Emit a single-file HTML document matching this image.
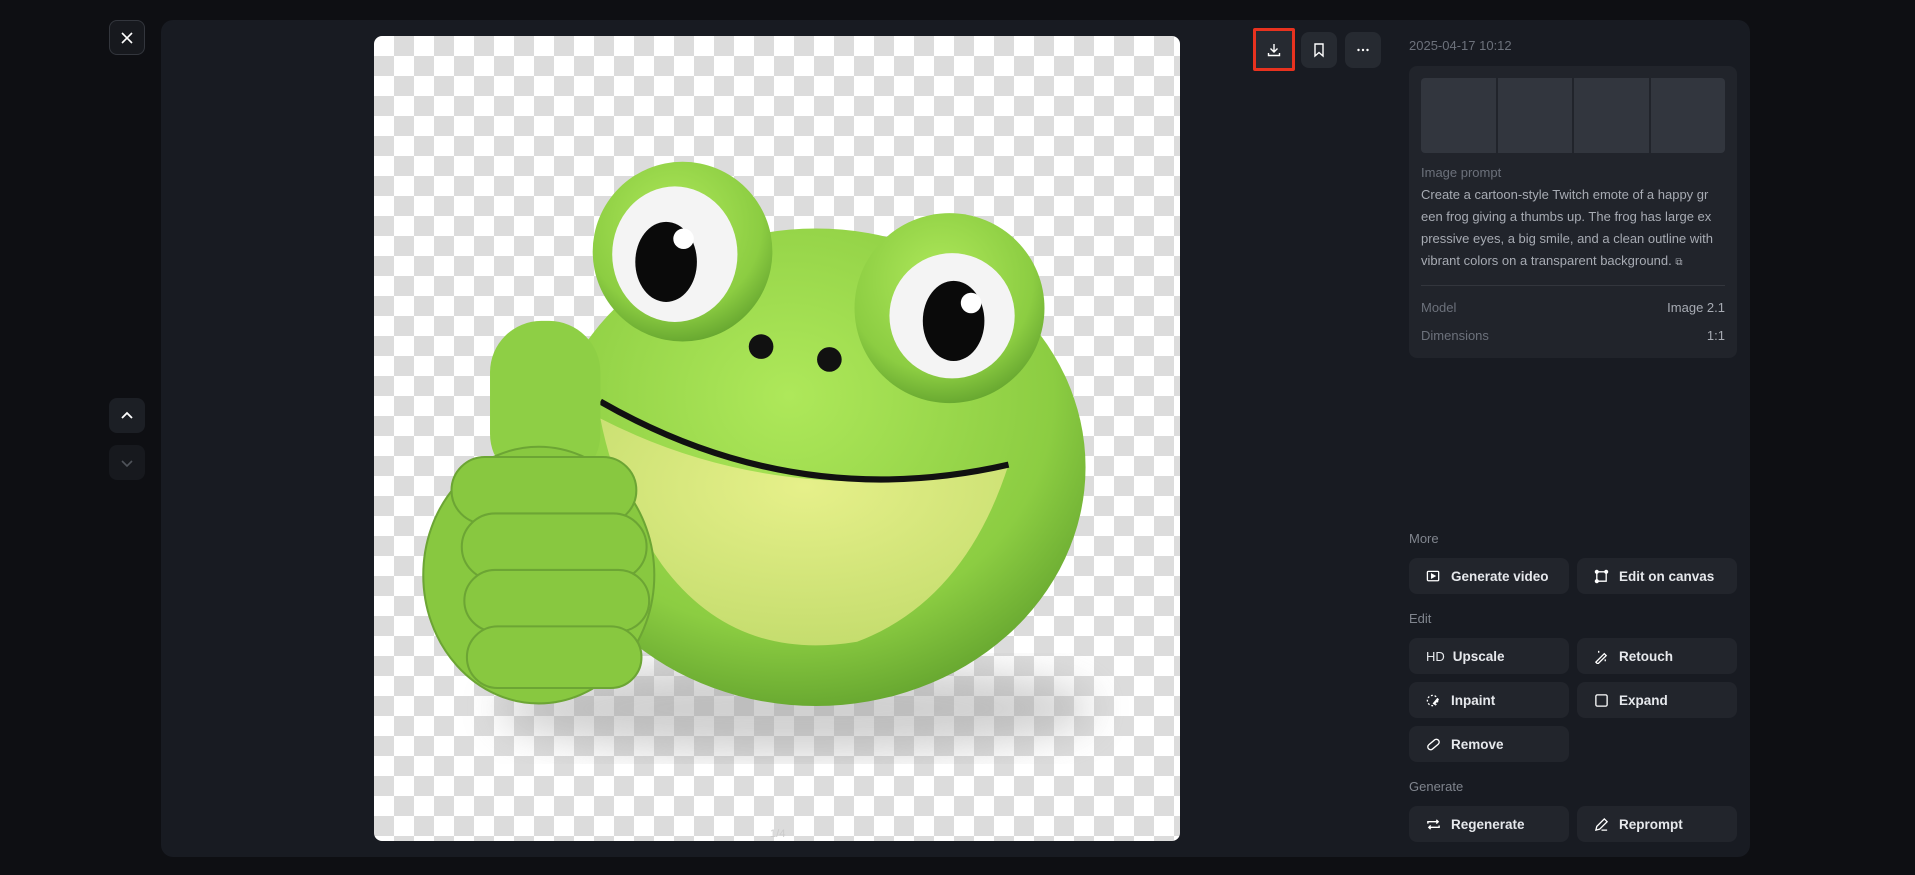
<!DOCTYPE html>
<html><head><meta charset="utf-8"><style>
*{box-sizing:border-box;margin:0;padding:0}
body{width:1915px;height:875px;background:#0e0f13;font-family:"Liberation Sans",sans-serif;position:relative;overflow:hidden}
.abs{position:absolute}
.sq{position:absolute;width:36px;height:35px;border-radius:8px;background:#1c1f25;display:flex;align-items:center;justify-content:center}
.panel{left:161px;top:20px;width:1589px;height:837px;background:#181b22;border-radius:12px}
.img{left:374px;top:36px;width:806px;height:805px;border-radius:8px;overflow:hidden;background-color:#fff;
background-image:linear-gradient(45deg,#dcdcdc 25%,transparent 25%,transparent 75%,#dcdcdc 75%),linear-gradient(45deg,#dcdcdc 25%,transparent 25%,transparent 75%,#dcdcdc 75%);
background-size:40px 40px;background-position:0 0,20px 20px}
.ib{position:absolute;top:32px;width:36px;height:36px;border-radius:8px;background:#262a31;display:flex;align-items:center;justify-content:center}
.card{left:1409px;top:66px;width:328px;height:292px;background:#21242b;border-radius:8px}
.lbl{color:#6c717b;font-size:13px}
.btn{position:absolute;width:160px;height:36px;border-radius:8px;background:#22252c;color:#e6e8ec;font-size:13.5px;font-weight:bold;display:flex;align-items:center;padding-left:17px}
.btn svg{margin-right:10px}
.sec{position:absolute;left:1409px;color:#80858e;font-size:13px}
</style></head><body>
<div class="sq" style="left:109px;top:20px;border:1px solid #33363d;background:#17191e"><svg width="16" height="16" viewBox="0 0 16 16"><path d="M3 3L13 13M13 3L3 13" stroke="#fff" stroke-width="1.6"/></svg></div>
<div class="sq" style="left:109px;top:398px"><svg width="16" height="16" viewBox="0 0 16 16"><path d="M3 10L8 5L13 10" stroke="#fff" stroke-width="1.8" fill="none"/></svg></div>
<div class="sq" style="left:109px;top:445px;background:#17191e"><svg width="16" height="16" viewBox="0 0 16 16"><path d="M3 6L8 11L13 6" stroke="#50545b" stroke-width="1.6" fill="none"/></svg></div>
<div class="abs panel"></div>
<div class="abs img">
<svg width="806" height="805" viewBox="0 0 1568 1568">
<defs><filter id="b"><feGaussianBlur stdDeviation="40"/></filter>
<radialGradient id="g" cx="0.45" cy="0.35" r="0.7"><stop offset="0" stop-color="#aee85a"/><stop offset="0.7" stop-color="#8ccd42"/><stop offset="1" stop-color="#5f9f2c"/></radialGradient>
<radialGradient id="y" cx="0.5" cy="0.3" r="0.7"><stop offset="0" stop-color="#e6f08a"/><stop offset="1" stop-color="#c5dd6e"/></radialGradient></defs>
<ellipse cx="820" cy="1310" rx="580" ry="90" fill="#999" opacity="0.45" filter="url(#b)"/>
<g fill="url(#g)">
<ellipse cx="860" cy="840" rx="525" ry="465"/>
<circle cx="600" cy="420" r="175"/>
<circle cx="1120" cy="530" r="185"/>
</g>
<path d="M440 745 Q800 930 1235 835 Q1150 1100 940 1180 Q700 1220 560 1030 Q470 900 440 745Z" fill="url(#y)"/>
<path d="M440 712 Q820 930 1235 835" stroke="#111" stroke-width="12" fill="none"/>
<ellipse cx="585" cy="425" rx="122" ry="132" fill="#f4f4f4"/>
<ellipse cx="1125" cy="545" rx="122" ry="122" fill="#f4f4f4"/>
<ellipse cx="568" cy="440" rx="60" ry="78" fill="#0a0a0a"/>
<ellipse cx="1128" cy="555" rx="60" ry="78" fill="#0a0a0a"/>
<circle cx="602" cy="395" r="20" fill="#fff"/>
<circle cx="1162" cy="520" r="20" fill="#fff"/>
<circle cx="753" cy="605" r="24" fill="#111"/>
<circle cx="886" cy="630" r="24" fill="#111"/>
<rect x="225" y="555" width="215" height="320" rx="100" fill="#8ecf45"/>
<g fill="#88c840" stroke="#6ca534" stroke-width="4">
<ellipse cx="320" cy="1050" rx="225" ry="250"/>
<rect x="150" y="820" width="360" height="130" rx="65"/>
<rect x="170" y="930" width="360" height="130" rx="65"/>
<rect x="175" y="1040" width="360" height="120" rx="60"/>
<rect x="180" y="1150" width="340" height="120" rx="60"/>
</g>
<text x="770" y="1560" font-size="22" fill="#ccc" font-family="Liberation Sans">1/4</text>
</svg></div>
<div class="ib" style="left:1253px;top:28px;width:42px;height:43px;border:3px solid #e8321f;border-radius:2px;background:#262a31"><svg width="16" height="16" viewBox="0 0 16 16" fill="none" stroke="#fff" stroke-width="1.4"><path d="M8 2V10M4.5 6.5L8 10L11.5 6.5M2.5 11V13.5H13.5V11"/></svg></div>
<div class="ib" style="left:1301px"><svg width="16" height="16" viewBox="0 0 16 16" fill="none" stroke="#fff" stroke-width="1.4"><path d="M4 2H12V14L8 10.5L4 14Z"/></svg></div>
<div class="ib" style="left:1345px"><svg width="16" height="16" viewBox="0 0 16 16" fill="#fff"><circle cx="3.5" cy="8" r="1.2"/><circle cx="8" cy="8" r="1.2"/><circle cx="12.5" cy="8" r="1.2"/></svg></div>
<div class="abs" style="left:1409px;top:38px;color:#6c717b;font-size:13px">2025-04-17 10:12</div>
<div class="abs card"></div>
<div class="abs" style="left:1421px;top:78px;display:flex;gap:2px">
<div style="width:75px;height:75px;background:#32363e;border-radius:4px 0 0 4px"></div><div style="width:74px;height:75px;background:#32363e"></div><div style="width:75px;height:75px;background:#32363e"></div><div style="width:74px;height:75px;background:#32363e;border-radius:0 4px 4px 0"></div></div>
<div class="abs lbl" style="left:1421px;top:165px">Image prompt</div>
<div class="abs" style="left:1421px;top:184px;width:310px;color:#a7abb3;font-size:13px;line-height:22px">Create a cartoon-style Twitch emote of a happy gr een frog giving a thumbs up. The frog has large ex pressive eyes, a big smile, and a clean outline with vibrant colors on a transparent background. <span style="font-size:10px">⧉</span></div>
<div class="abs" style="left:1421px;top:285px;width:304px;height:1px;background:#33363d"></div>
<div class="abs lbl" style="left:1421px;top:300px">Model</div>
<div class="abs" style="right:190px;top:300px;color:#a7abb3;font-size:13px">Image 2.1</div>
<div class="abs lbl" style="left:1421px;top:328px">Dimensions</div>
<div class="abs" style="right:190px;top:328px;color:#a7abb3;font-size:13px">1:1</div>
<div class="sec" style="top:531px">More</div>
<div class="btn" style="left:1409px;top:558px"><svg width="15" height="15" viewBox="0 0 16 16" fill="none" stroke="#fff" stroke-width="1.4"><rect x="1.5" y="2.5" width="12" height="10" rx="1"/><path d="M6 5.5L9.5 7.5L6 9.5Z" fill="#fff"/></svg>Generate video</div>
<div class="btn" style="left:1577px;top:558px"><svg width="15" height="15" viewBox="0 0 16 16" fill="none" stroke="#fff" stroke-width="1.4"><path d="M3 3H13V13H3Z"/><circle cx="3" cy="3" r="1.5" fill="#fff"/><circle cx="13" cy="3" r="1.5" fill="#fff"/><circle cx="3" cy="13" r="1.5" fill="#fff"/></svg>Edit on canvas</div>
<div class="sec" style="top:611px">Edit</div>
<div class="btn" style="left:1409px;top:638px"><span style="font-weight:normal;font-size:13px;margin-right:8px">HD</span>Upscale</div>
<div class="btn" style="left:1577px;top:638px"><svg width="15" height="15" viewBox="0 0 16 16" fill="none" stroke="#fff" stroke-width="1.4"><path d="M2 14L11 5L13 7L4 16Z M5 2V4 M12 11V13"/></svg>Retouch</div>
<div class="btn" style="left:1409px;top:682px"><svg width="15" height="15" viewBox="0 0 16 16" fill="none" stroke="#fff" stroke-width="1.4" stroke-dasharray="2 2"><circle cx="7" cy="8" r="5.5"/><path d="M8 12L13 6" stroke-dasharray="none" stroke-width="2.5"/></svg>Inpaint</div>
<div class="btn" style="left:1577px;top:682px"><svg width="15" height="15" viewBox="0 0 16 16" fill="none" stroke="#fff" stroke-width="1.4"><rect x="2" y="2" width="12" height="12" rx="1.5"/></svg>Expand</div>
<div class="btn" style="left:1409px;top:726px"><svg width="15" height="15" viewBox="0 0 16 16" fill="none" stroke="#fff" stroke-width="1.4"><rect x="1" y="5" width="14" height="6" rx="3" transform="rotate(-40 8 8)"/></svg>Remove</div>
<div class="sec" style="top:779px">Generate</div>
<div class="btn" style="left:1409px;top:806px"><svg width="15" height="15" viewBox="0 0 16 16" fill="none" stroke="#fff" stroke-width="1.5"><path d="M2 7V5H13M11 3L13 5L11 7M14 9V11H3M5 13L3 11L5 9"/></svg>Regenerate</div>
<div class="btn" style="left:1577px;top:806px"><svg width="15" height="15" viewBox="0 0 16 16" fill="none" stroke="#fff" stroke-width="1.4"><path d="M2 14L3 10L11 2L14 5L6 13Z M8 14H14"/></svg>Reprompt</div>
</body></html>
